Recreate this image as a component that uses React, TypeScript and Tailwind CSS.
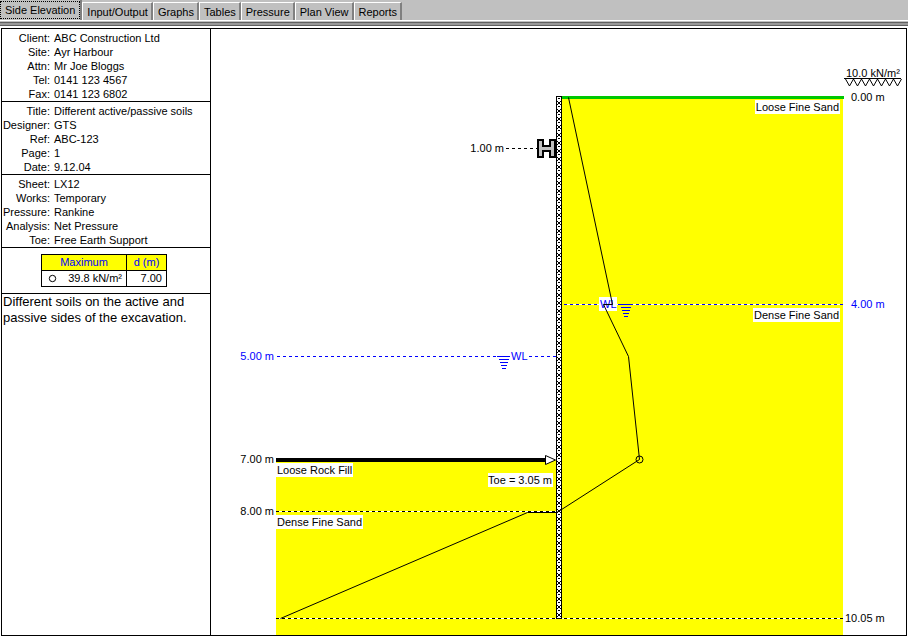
import clsx from 'clsx'

const tabs = ['Side Elevation', 'Input/Output', 'Graphs', 'Tables', 'Pressure', 'Plan View', 'Reports']

const sections = [
  [
    ['Client', 'ABC Construction Ltd'],
    ['Site', 'Ayr Harbour'],
    ['Attn', 'Mr Joe Bloggs'],
    ['Tel', '0141 123 4567'],
    ['Fax', '0141 123 6802'],
  ],
  [
    ['Title', 'Different active/passive soils'],
    ['Designer', 'GTS'],
    ['Ref', 'ABC-123'],
    ['Page', '1'],
    ['Date', '9.12.04'],
  ],
  [
    ['Sheet', 'LX12'],
    ['Works', 'Temporary'],
    ['Pressure', 'Rankine'],
    ['Analysis', 'Net Pressure'],
    ['Toe', 'Free Earth Support'],
  ],
]

function TabBar() {
  return (
    <header className="bg-[#c0c0c0]">
      <div role="tablist" className="flex h-5 items-end">
        {tabs.map((tab, i) => (
          <button
            key={tab}
            role="tab"
            aria-selected={i === 0}
            className={clsx(
              'whitespace-nowrap border-r-2 border-[#808080]',
              i === 0 ? 'h-5 pb-px' : 'h-[18px] border-l border-l-white border-t border-t-white pl-1 pr-[3px]',
            )}
          >
            {i === 0 ? (
              <span className="flex h-[18px] items-center border border-dotted border-black px-1">{tab}</span>
            ) : (
              tab
            )}
          </button>
        ))}
      </div>
      <div className="h-px bg-white" />
      <div className="mt-px h-1 border-y border-[#606060] bg-[#999999]" />
    </header>
  )
}

function Sidebar() {
  return (
    <aside className="w-[209px] shrink-0 border-r border-black">
      {sections.map((rows, i) => (
        <dl key={i} className="border-b border-black pt-[2px] leading-[14px]">
          {rows.map(([label, value]) => (
            <div key={label} className="flex gap-1">
              <dt className="flex w-12 shrink-0 justify-end">{label}:</dt>
              <dd className="whitespace-nowrap">{value}</dd>
            </div>
          ))}
        </dl>
      ))}
      <div className="border-b border-black py-[6px] pl-[39px]">
        <table className="w-[126px] border-collapse text-center leading-[15px]">
          <thead>
            <tr className="bg-[#ffff00] text-[#0000ff]">
              <th className="border border-black p-0 font-normal">Maximum</th>
              <th className="w-10 border border-black p-0 font-normal">d (m)</th>
            </tr>
          </thead>
          <tbody>
            <tr>
              <td className="border border-black p-0">
                <div className="flex h-[15px] items-center justify-between pr-1 pl-[6px]">
                  <svg width="9" height="9" viewBox="0 0 9 9">
                    <circle cx="4.5" cy="4.5" r="3.2" fill="none" stroke="#000" />
                  </svg>
                  39.8 kN/m²
                </div>
              </td>
              <td className="border border-black p-0 pr-1 text-right">7.00</td>
            </tr>
          </tbody>
        </table>
      </div>
      <p className="px-px text-[13px] leading-4">Different soils on the active and passive sides of the excavation.</p>
    </aside>
  )
}

// depth in metres -> y in the drawing
const depthY = (d: number) => Math.round(67.5 + 51.85 * d) + 0.5

type LabelProps = { x: number; y: number; w: number; text: string; end?: boolean; color?: string }

// text on an opaque white box
function Label({ x, y, w, text, end, color = '#000' }: LabelProps) {
  return (
    <g>
      <rect x={end ? x - w + 1 : x - 1} y={y - 11} width={w} height={14} fill="#fff" />
      <text x={x} y={y} textAnchor={end ? 'end' : 'start'} fill={color}>
        {text}
      </text>
    </g>
  )
}

function DashLine({ x1, x2, y, color = '#000' }: { x1: number; x2: number; y: number; color?: string }) {
  return (
    <g shapeRendering="crispEdges">
      <path d={`M${x1} ${y}H${x2}`} stroke="#fff" />
      <path d={`M${x1} ${y}H${x2}`} stroke={color} strokeDasharray="3 3" />
    </g>
  )
}

function WaterMark({ x, y }: { x: number; y: number }) {
  return (
    <path
      d={`M${x - 7} ${y}h14M${x - 5} ${y + 3}h10M${x - 4} ${y + 6}h8M${x - 3} ${y + 9}h6M${x - 2} ${y + 12}h4`}
      stroke="#0000ff"
      shapeRendering="crispEdges"
    />
  )
}

function Elevation() {
  return (
    <svg viewBox="0 0 695 606" className="block h-auto w-full" fill="none" fontSize="11">
      <defs>
        <pattern id="sheet" x="346" y="72" width="4" height="8" patternUnits="userSpaceOnUse">
          <rect width="4" height="8" fill="#fff" />
          <path
            d="M0 0h1v1H0zM3 0h1v1H3zM1 1h2v2H1zM0 3h1v1H0zM3 3h1v1H3zM1 5h2v1H1z"
            fill="#000"
          />
        </pattern>
      </defs>

      {/* soil blocks */}
      <g shapeRendering="crispEdges">
        <rect x="351" y="69" width="281" height="537" fill="#ffff00" />
        <rect x="65" y="431" width="280" height="175" fill="#ffff00" />
        <rect x="345" y="589" width="6" height="17" fill="#ffff00" />
        <rect x="351" y="67" width="282" height="3" fill="#00c800" />
        <rect x="65" y="429" width="271" height="4" fill="#000" />
      </g>

      <DashLine x1={353} x2={632} y={depthY(4)} color="#0000ff" />
      <DashLine x1={66} x2={345} y={depthY(5)} color="#0000ff" />
      <DashLine x1={65} x2={345} y={depthY(8)} />
      <DashLine x1={65} x2={632} y={depthY(10.05)} />
      <DashLine x1={295} x2={326} y={depthY(1)} />

      {/* sheet pile */}
      <g shapeRendering="crispEdges">
        <rect x="345" y="67" width="6" height="523" fill="#000" />
        <rect x="346" y="68" width="4" height="521" fill="url(#sheet)" />
      </g>

      {/* waling */}
      <path
        d="M327 111h5v6h7v-6h5v17h-5v-6h-7v6h-5z"
        fill="#c0c0c0"
        stroke="#000"
        strokeWidth="2"
        shapeRendering="crispEdges"
      />
      <path d="M334.5 426.5v9l10-4.5z" fill="#fff" stroke="#000" />

      <WaterMark x={415} y={depthY(4)} />
      <WaterMark x={293} y={depthY(5)} />
      <Label x={389} y={279} w={18} text="WL" color="#0000ff" />
      <Label x={300} y={331} w={18} text="WL" color="#0000ff" />

      {/* surcharge */}
      <text x="635" y="48" fill="#000">
        10.0 kN/m²
      </text>
      <path
        d="M633 49.5H690M634.5 50l4 7 4-7 4 7 4-7 4 7 4-7 4 7 4-7 4 7 4-7 4 7 4-7 4 7 4-7"
        stroke="#000"
      />

      <Label x={628} y={82} w={85} text="Loose Fine Sand" end />
      <Label x={628} y={290} w={87} text="Dense Fine Sand" end />
      <Label x={66} y={445} w={77} text="Loose Rock Fill" />
      <Label x={66} y={497} w={87} text="Dense Fine Sand" />
      <Label x={341} y={455} w={65} text="Toe = 3.05 m" end />

      {/* net pressure */}
      <path
        d="M357.5 68.5L401.5 275.5H392.5L417.5 327.5L428.5 430.5L347.5 482.5L345.5 483.5H316.5L69.5 589.5"
        stroke="#000"
      />
      <circle cx="428.5" cy="430.5" r="3.5" stroke="#000" />

      <g fill="#000">
        <text x="640" y="72">0.00 m</text>
        <text x="640" y="279" fill="#0000ff">
          4.00 m
        </text>
        <text x="634" y="593">10.05 m</text>
        <g textAnchor="end">
          <text x="293" y="123">1.00 m</text>
          <text x="63" y="331" fill="#0000ff">
            5.00 m
          </text>
          <text x="63" y="434">7.00 m</text>
          <text x="63" y="486">8.00 m</text>
        </g>
      </g>
    </svg>
  )
}

export default function App() {
  return (
    <div className="min-h-screen bg-white font-['Liberation_Sans',Arial,sans-serif] text-[11px] leading-[14px] text-black">
      <TabBar />
      <div className="mx-px mt-[2px] flex border border-black">
        <Sidebar />
        <main className="min-w-0 flex-1">
          <Elevation />
        </main>
      </div>
    </div>
  )
}
